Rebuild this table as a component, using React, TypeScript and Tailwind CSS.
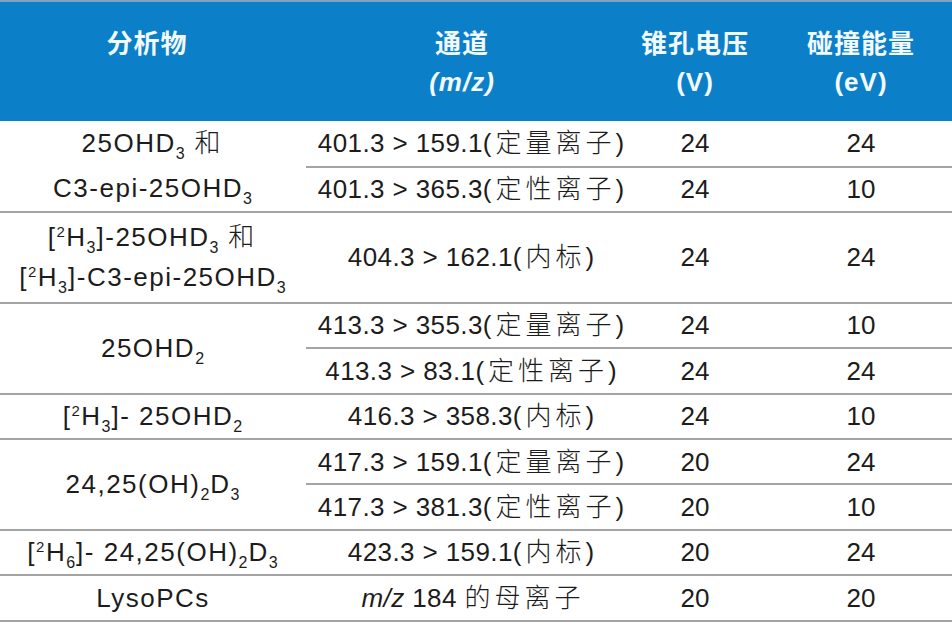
import React from "react";

const Sub: React.FC<{ children: React.ReactNode }> = ({ children }) => (
  <span className="text-[16px] leading-[0] align-[-7px] tracking-[1px]">{children}</span>
);

const Sup: React.FC<{ children: React.ReactNode }> = ({ children }) => (
  <span className="text-[15px] leading-[0] align-[9px]">{children}</span>
);

const Zh: React.FC<{ children: React.ReactNode }> = ({ children }) => (
  <span className="font-light tracking-[4px]">{children}</span>
);

const line = "border-b-2 border-[#a4a4a4] whitespace-nowrap p-0 leading-[30px]";
const c1 = `${line} text-center tracking-[1.5px]`;
const c2 = `${line} text-center tracking-[0.4px]`;
const c3 = `${line} text-center pr-[20px]`;
const c4 = `${line} text-center`;

export default function App() {
  return (
    <div className="w-[952px] h-[625px] bg-white font-['Liberation_Sans','Noto_Sans_CJK_SC',sans-serif] text-[#1c1c1c] overflow-hidden">
      <div className="h-[2px] bg-[#7ea3c1]" />
      <table className="w-full table-fixed border-collapse text-[26px]">
        <colgroup>
          <col className="w-[306px]" />
          <col className="w-[334px]" />
          <col className="w-[130px]" />
          <col />
        </colgroup>
        <thead>
          <tr className="h-[119px] bg-[#0b7fc8] text-[#f2f9fd] font-bold leading-[38px]">
            <th className="align-top pt-[23px] pr-[12px] tracking-[1px] p-0">分析物</th>
            <th className="align-top pt-[23px] pr-[22px] tracking-[1px]">
              <div>通道</div>
              <div className="italic">(m/z)</div>
            </th>
            <th className="align-top pt-[23px] pr-[20px] tracking-[1px] whitespace-nowrap">
              <div>锥孔电压</div>
              <div>(V)</div>
            </th>
            <th className="align-top pt-[23px] tracking-[1px]">
              <div>碰撞能量</div>
              <div>(eV)</div>
            </th>
          </tr>
        </thead>
        <tbody>
          <tr className="h-[45.4px]">
            <td rowSpan={2} className={c1}>
              <div className="leading-[45px]">
                25OHD<Sub>3</Sub> <Zh>和</Zh>
              </div>
              <div className="leading-[45px]">
                C3-epi-25OHD<Sub>3</Sub>
              </div>
            </td>
            <td className={c2}>
              401.3 &gt; 159.1<Zh>(定量离子)</Zh>
            </td>
            <td className={c3}>24</td>
            <td className={c4}>24</td>
          </tr>
          <tr className="h-[45.4px]">
            <td className={c2}>
              401.3 &gt; 365.3<Zh>(定性离子)</Zh>
            </td>
            <td className={c3}>24</td>
            <td className={c4}>10</td>
          </tr>

          <tr className="h-[45.4px]">
            <td rowSpan={2} className={c1}>
              <div className="leading-[40px]">
                [<Sup>2</Sup>H<Sub>3</Sub>]-25OHD<Sub>3</Sub> <Zh>和</Zh>
              </div>
              <div className="leading-[40px]">
                [<Sup>2</Sup>H<Sub>3</Sub>]-C3-epi-25OHD<Sub>3</Sub>
              </div>
            </td>
            <td rowSpan={2} className={c2}>
              404.3 &gt; 162.1<Zh>(内标)</Zh>
            </td>
            <td rowSpan={2} className={c3}>24</td>
            <td rowSpan={2} className={c4}>24</td>
          </tr>
          <tr className="h-[45.4px]" />

          <tr className="h-[45.4px]">
            <td rowSpan={2} className={c1}>
              25OHD<Sub>2</Sub>
            </td>
            <td className={c2}>
              413.3 &gt; 355.3<Zh>(定量离子)</Zh>
            </td>
            <td className={c3}>24</td>
            <td className={c4}>10</td>
          </tr>
          <tr className="h-[45.4px]">
            <td className={c2}>
              413.3 &gt; 83.1<Zh>(定性离子)</Zh>
            </td>
            <td className={c3}>24</td>
            <td className={c4}>24</td>
          </tr>

          <tr className="h-[45.4px]">
            <td className={c1}>
              [<Sup>2</Sup>H<Sub>3</Sub>]- 25OHD<Sub>2</Sub>
            </td>
            <td className={c2}>
              416.3 &gt; 358.3<Zh>(内标)</Zh>
            </td>
            <td className={c3}>24</td>
            <td className={c4}>10</td>
          </tr>

          <tr className="h-[45.4px]">
            <td rowSpan={2} className={c1}>
              24,25(OH)<Sub>2</Sub>D<Sub>3</Sub>
            </td>
            <td className={c2}>
              417.3 &gt; 159.1<Zh>(定量离子)</Zh>
            </td>
            <td className={c3}>20</td>
            <td className={c4}>24</td>
          </tr>
          <tr className="h-[45.4px]">
            <td className={c2}>
              417.3 &gt; 381.3<Zh>(定性离子)</Zh>
            </td>
            <td className={c3}>20</td>
            <td className={c4}>10</td>
          </tr>

          <tr className="h-[45.4px]">
            <td className={c1}>
              [<Sup>2</Sup>H<Sub>6</Sub>]- 24,25(OH)<Sub>2</Sub>D<Sub>3</Sub>
            </td>
            <td className={c2}>
              423.3 &gt; 159.1<Zh>(内标)</Zh>
            </td>
            <td className={c3}>20</td>
            <td className={c4}>24</td>
          </tr>

          <tr className="h-[45.4px]">
            <td className={c1}>LysoPCs</td>
            <td className={c2}>
              <span className="italic">m/z</span> 184 <Zh>的母离子</Zh>
            </td>
            <td className={c3}>20</td>
            <td className={c4}>20</td>
          </tr>
        </tbody>
      </table>
    </div>
  );
}
